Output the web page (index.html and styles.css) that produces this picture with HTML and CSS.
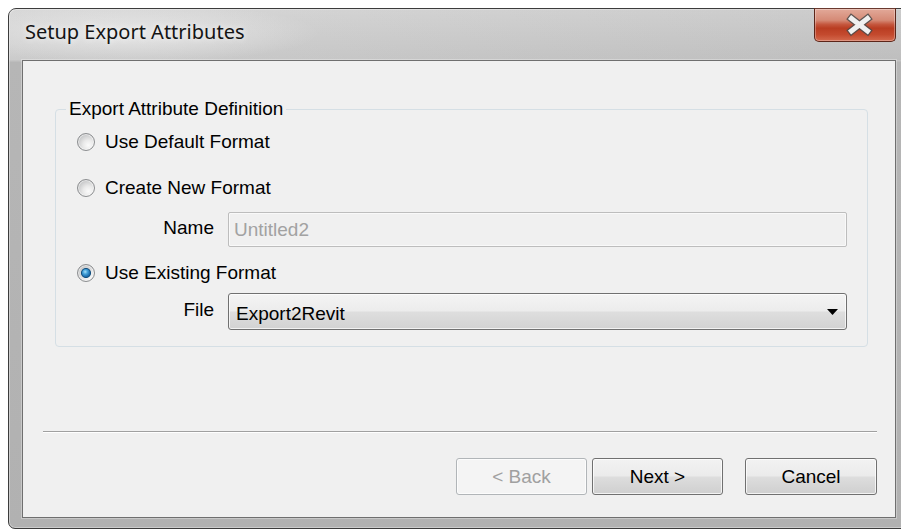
FILE: index.html
```html
<!DOCTYPE html>
<html lang="en">
<head>
<meta charset="utf-8">
<title>Setup Export Attributes</title>
<link rel="stylesheet" href="styles.css">
</head>
<body>
<div class="window">
  <div class="titlebar">
    <span class="title">Setup Export Attributes</span>
    <button class="close" type="button" aria-label="Close">
      <svg width="82" height="34" viewBox="0 0 82 34">
        <path d="M37.5 10.5 L53.5 23 M53.5 10.5 L37.5 23" stroke="#4a4a4a" stroke-width="7.5" stroke-linecap="square" fill="none" opacity="0.85"/>
        <path d="M37.5 10.5 L53.5 23 M53.5 10.5 L37.5 23" stroke="#f0f0f0" stroke-width="5" stroke-linecap="square" fill="none"/>
      </svg>
    </button>
  </div>
  <div class="client">
    <fieldset class="group">
      <legend>Export Attribute Definition</legend>
      <label class="option opt-default"><span class="radio"></span>Use Default Format</label>
      <label class="option opt-new"><span class="radio"></span>Create New Format</label>
      <div class="field name-field">
        <span class="field-label">Name</span>
        <div class="textbox disabled">Untitled2</div>
      </div>
      <label class="option opt-existing"><span class="radio checked"></span>Use Existing Format</label>
      <div class="field file-field">
        <span class="field-label">File</span>
        <div class="combo">
          <span>Export2Revit</span>
          <svg class="arrow" width="11" height="6" viewBox="0 0 11 6"><path d="M0 0 H11 L5.5 6 Z" fill="#000"/></svg>
        </div>
      </div>
    </fieldset>
    <div class="separator"></div>
    <div class="buttons">
      <button class="btn back" type="button" disabled>&lt; Back</button>
      <button class="btn next" type="button">Next &gt;</button>
      <button class="btn cancel" type="button">Cancel</button>
    </div>
  </div>
</div>
</body>
</html>
```
FILE: styles.css
```css
html, body {
  margin: 0;
  padding: 0;
  overflow: hidden;
  background: #ffffff;
}

body {
  width: 901px;
  height: 530px;
  font-family: "Liberation Sans", Arial, sans-serif;
  font-size: 19px;
  color: #000;
}

/* window frame */
.window {
  box-sizing: border-box;
  width: 902px;
  height: 521px;
  margin: 8px 0 0 8px;
  padding: 0 13px 10px 13px;
  border: 1px solid #3c3c3c;
  border-radius: 8px 8px 0 7px;
  background: linear-gradient(to bottom, #d2d2d2 0, #c4c4c4 52px, #b6b6b6 53px, #b1b1b1 100%);
  box-shadow: inset 0 0 0 1px rgba(255, 255, 255, 0.35);
  display: flex;
  flex-direction: column;
}

.titlebar {
  height: 51px;
  display: flex;
  align-items: flex-start;
  background: radial-gradient(ellipse 190px 30px at 120px 24px, rgba(236, 236, 236, 0.8), rgba(236, 236, 236, 0) 100%),
              linear-gradient(to right, rgba(255, 255, 255, 0.12), rgba(0, 0, 0, 0.03));
  margin: 0 -13px;
  padding: 0 13px 0 16px;
}

.title {
  font-family: "Noto Sans", "Open Sans", sans-serif;
  font-size: 20px;
  line-height: 24px;
  margin-top: 11px;
  color: #141414;
  text-shadow: 0 0 6px rgba(255, 255, 255, 0.9);
}

.close {
  margin-left: auto;
  margin-top: -1px;
  width: 82px;
  height: 34px;
  padding: 0;
  border: 1px solid #5c2519;
  border-top-color: #6a3a30;
  border-radius: 0 0 5px 5px;
  background: linear-gradient(to bottom, #e2a999 0, #d58a76 35%, #c5573e 48%, #b93d22 60%, #c44a2e 80%, #d46a4e 100%);
  box-shadow: inset 0 0 0 1px rgba(255, 255, 255, 0.3);
  display: block;
}

.close svg {
  display: block;
  margin: -1px;
}

/* client area */
.client {
  box-sizing: border-box;
  height: 458px;
  border: 1px solid #6f6f6f;
  background: #f0f0f0;
  box-shadow: 0 0 0 1px rgba(255, 255, 255, 0.3);
  display: flex;
  flex-direction: column;
}

.group {
  margin: 37px 27px 0 32px;
  padding: 0 20px 16px 20px;
  border: 1px solid #d5dfe5;
  border-radius: 4px;
  min-inline-size: 0;
  display: flex;
  flex-direction: column;
}

.group legend {
  margin-left: -10px;
  padding: 0 3px;
  line-height: 22px;
  color: #000;
}

.option {
  height: 30px;
  display: flex;
  align-items: center;
  color: #000;
}

.opt-default { margin-top: 7px; }
.opt-new { margin-top: 16px; }
.opt-existing { margin-top: 11px; }

.radio {
  box-sizing: border-box;
  width: 18px;
  height: 18px;
  margin: 0 10px 0 1px;
  border-radius: 50%;
  border: 1px solid #8c8e90;
  background: radial-gradient(circle at 65% 70%, #fbfbfb 0, #e9e9e9 35%, #c9cacb 70%, #b9babb 100%);
  box-shadow: inset 0 0 0 1px rgba(255, 255, 255, 0.55);
  flex: none;
}

.radio.checked {
  background:
    radial-gradient(circle at 50% 50%, rgba(21, 80, 127, 1) 0, rgba(21, 80, 127, 1) 4.6px, rgba(21, 80, 127, 0) 5.4px),
    radial-gradient(circle at 65% 70%, #fbfbfb 0, #e9e9e9 35%, #c9cacb 70%, #b9babb 100%);
  position: relative;
}

.radio.checked::after {
  content: "";
  display: block;
  width: 8px;
  height: 8px;
  margin: 4px;
  border-radius: 50%;
  background: radial-gradient(circle at 40% 35%, #a8e0fa 0, #4aa6dc 30%, #1f72b2 65%, #16558a 100%);
}

.field {
  display: grid;
  grid-template-columns: 138px 1fr;
  column-gap: 14px;
  align-items: center;
}

.name-field { margin-top: 9px; }
.file-field { margin-top: 5px; }

.field-label {
  text-align: right;
  margin-top: -4px;
}

.textbox {
  box-sizing: border-box;
  height: 35px;
  border: 1px solid #bdbdbd;
  border-radius: 2px;
  padding: 0 5px;
  display: flex;
  align-items: center;
  background: #f0f0f0;
}

.textbox.disabled {
  color: #a2a2a2;
  box-shadow: inset 0 0 0 1px rgba(255, 255, 255, 0.6);
}

.combo {
  box-sizing: border-box;
  height: 37px;
  border: 1px solid #707070;
  border-radius: 3px;
  padding: 4px 8px 0 7px;
  display: flex;
  align-items: center;
  justify-content: space-between;
  background: linear-gradient(to bottom, #f4f4f4 0, #ececec 48%, #dedede 52%, #d2d2d2 100%);
  box-shadow: inset 0 0 0 1px rgba(255, 255, 255, 0.7);
}

.combo .arrow {
  margin-top: -4px;
}

.separator {
  margin: 84px 18px 0 20px;
  border-top: 1px solid #a0a0a0;
  border-bottom: 1px solid #ffffff;
}

.buttons {
  margin: 25px 18px 0 0;
  display: flex;
  justify-content: flex-end;
}

.btn {
  box-sizing: border-box;
  width: 131px;
  height: 37px;
  padding: 0;
  font-family: "Liberation Sans", Arial, sans-serif;
  font-size: 19px;
  color: #000;
  border: 1px solid #707070;
  border-radius: 3px;
  background: linear-gradient(to bottom, #f2f2f2 0, #ebebeb 48%, #dddddd 52%, #cfcfcf 100%);
  box-shadow: inset 0 0 0 1px rgba(255, 255, 255, 0.75);
}

.btn.back {
  margin-right: 5px;
  color: #a0a0a0;
  border-color: #b1b5b8;
  background: #f4f4f4;
}

.btn.next {
  margin-right: 22px;
}

.btn.cancel {
  width: 132px;
}
```
